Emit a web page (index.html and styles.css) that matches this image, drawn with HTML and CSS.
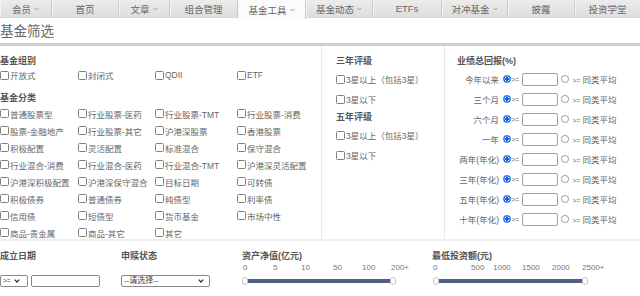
FILE: index.html
```html
<!DOCTYPE html>
<html lang="zh-CN">
<head>
<meta charset="utf-8">
<title>基金筛选</title>
<link rel="stylesheet" href="styles.css">
</head>
<body>
<nav class="nav">
  <a class="tab t1">会员<svg class="caret" viewBox="0 0 6 4"><polyline points="0.5,0.5 3,3.2 5.5,0.5"/></svg></a>
  <a class="tab t2">首页</a>
  <a class="tab t3">文章<svg class="caret" viewBox="0 0 6 4"><polyline points="0.5,0.5 3,3.2 5.5,0.5"/></svg></a>
  <a class="tab t4">组合管理</a>
  <a class="tab t5 active">基金工具<svg class="caret" viewBox="0 0 6 4"><polyline points="0.5,0.5 3,3.2 5.5,0.5"/></svg></a>
  <a class="tab t6">基金动态<svg class="caret" viewBox="0 0 6 4"><polyline points="0.5,0.5 3,3.2 5.5,0.5"/></svg></a>
  <a class="tab t7">ETFs</a>
  <a class="tab t8">对冲基金<svg class="caret" viewBox="0 0 6 4"><polyline points="0.5,0.5 3,3.2 5.5,0.5"/></svg></a>
  <a class="tab t9">披露</a>
  <a class="tab t10">投资学堂</a>
</nav>
<h1 class="title">基金筛选</h1>
<div class="rule"></div>

<section class="filters">
  <div class="col col-type">
    <h2 class="hd">基金组别</h2>
    <div class="grid grid-group">
      <label class="cb"><input type="checkbox">开放式</label>
      <label class="cb"><input type="checkbox">封闭式</label>
      <label class="cb"><input type="checkbox">QDII</label>
      <label class="cb"><input type="checkbox">ETF</label>
    </div>
    <h2 class="hd hd-cat">基金分类</h2>
    <div class="grid grid-cat">
      <label class="cb"><input type="checkbox">普通股票型</label>
      <label class="cb"><input type="checkbox">行业股票-医药</label>
      <label class="cb"><input type="checkbox">行业股票-TMT</label>
      <label class="cb"><input type="checkbox">行业股票-消费</label>
      <label class="cb"><input type="checkbox">股票-金融地产</label>
      <label class="cb"><input type="checkbox">行业股票-其它</label>
      <label class="cb"><input type="checkbox">沪港深股票</label>
      <label class="cb"><input type="checkbox">香港股票</label>
      <label class="cb"><input type="checkbox">积极配置</label>
      <label class="cb"><input type="checkbox">灵活配置</label>
      <label class="cb"><input type="checkbox">标准混合</label>
      <label class="cb"><input type="checkbox">保守混合</label>
      <label class="cb"><input type="checkbox">行业混合-消费</label>
      <label class="cb"><input type="checkbox">行业混合-医药</label>
      <label class="cb"><input type="checkbox">行业混合-TMT</label>
      <label class="cb"><input type="checkbox">沪港深灵活配置</label>
      <label class="cb"><input type="checkbox">沪港深积极配置</label>
      <label class="cb"><input type="checkbox">沪港深保守混合</label>
      <label class="cb"><input type="checkbox">目标日期</label>
      <label class="cb"><input type="checkbox">可转债</label>
      <label class="cb"><input type="checkbox">积极债券</label>
      <label class="cb"><input type="checkbox">普通债券</label>
      <label class="cb"><input type="checkbox">纯债型</label>
      <label class="cb"><input type="checkbox">利率债</label>
      <label class="cb"><input type="checkbox">信用债</label>
      <label class="cb"><input type="checkbox">短债型</label>
      <label class="cb"><input type="checkbox">货币基金</label>
      <label class="cb"><input type="checkbox">市场中性</label>
      <label class="cb"><input type="checkbox">商品-贵金属</label>
      <label class="cb"><input type="checkbox">商品-其它</label>
      <label class="cb"><input type="checkbox">其它</label>
    </div>
  </div>

  <div class="col col-rating">
    <h2 class="hd">三年评级</h2>
    <label class="cb row"><input type="checkbox">3星以上（包括3星）</label>
    <label class="cb row"><input type="checkbox">3星以下</label>
    <h2 class="hd hd-five">五年评级</h2>
    <label class="cb row"><input type="checkbox">3星以上（包括3星）</label>
    <label class="cb row"><input type="checkbox">3星以下</label>
  </div>

  <div class="col col-perf">
    <h2 class="hd">业绩总回报(%)</h2>
    <div class="prow"><span class="plabel">今年以来</span><input class="rd" type="radio" name="p1" checked><span class="ge">&gt;=</span><input class="num" type="text"><input class="rd" type="radio" name="p1"><span class="avg"><span class="ge2">&gt;=</span> 同类平均</span></div>
    <div class="prow"><span class="plabel">三个月</span><input class="rd" type="radio" name="p2" checked><span class="ge">&gt;=</span><input class="num" type="text"><input class="rd" type="radio" name="p2"><span class="avg"><span class="ge2">&gt;=</span> 同类平均</span></div>
    <div class="prow"><span class="plabel">六个月</span><input class="rd" type="radio" name="p3" checked><span class="ge">&gt;=</span><input class="num" type="text"><input class="rd" type="radio" name="p3"><span class="avg"><span class="ge2">&gt;=</span> 同类平均</span></div>
    <div class="prow"><span class="plabel">一年</span><input class="rd" type="radio" name="p4" checked><span class="ge">&gt;=</span><input class="num" type="text"><input class="rd" type="radio" name="p4"><span class="avg"><span class="ge2">&gt;=</span> 同类平均</span></div>
    <div class="prow"><span class="plabel">两年(年化)</span><input class="rd" type="radio" name="p5" checked><span class="ge">&gt;=</span><input class="num" type="text"><input class="rd" type="radio" name="p5"><span class="avg"><span class="ge2">&gt;=</span> 同类平均</span></div>
    <div class="prow"><span class="plabel">三年(年化)</span><input class="rd" type="radio" name="p6" checked><span class="ge">&gt;=</span><input class="num" type="text"><input class="rd" type="radio" name="p6"><span class="avg"><span class="ge2">&gt;=</span> 同类平均</span></div>
    <div class="prow"><span class="plabel">五年(年化)</span><input class="rd" type="radio" name="p7" checked><span class="ge">&gt;=</span><input class="num" type="text"><input class="rd" type="radio" name="p7"><span class="avg"><span class="ge2">&gt;=</span> 同类平均</span></div>
    <div class="prow"><span class="plabel">十年(年化)</span><input class="rd" type="radio" name="p8" checked><span class="ge">&gt;=</span><input class="num" type="text"><input class="rd" type="radio" name="p8"><span class="avg"><span class="ge2">&gt;=</span> 同类平均</span></div>
  </div>
</section>

<section class="bottom">
  <div class="bcol bc1">
    <h2 class="hd">成立日期</h2>
    <div class="ctrl">
      <div class="selwrap sel-op">
        <select class="sel"><option>&gt;=</option></select>
        <svg class="selcaret" viewBox="0 0 7 5"><polyline points="0.8,0.8 3.5,3.8 6.2,0.8"/></svg>
      </div>
      <input class="date" type="text">
    </div>
  </div>
  <div class="bcol bc2">
    <h2 class="hd">申赎状态</h2>
    <div class="ctrl">
      <div class="selwrap sel-status">
        <select class="sel"><option>--请选择--</option></select>
        <svg class="selcaret" viewBox="0 0 7 5"><polyline points="0.8,0.8 3.5,3.8 6.2,0.8"/></svg>
      </div>
    </div>
  </div>
  <div class="bcol bc3">
    <h2 class="hd">资产净值(亿元)</h2>
    <div class="scale scale-a"><span>0</span><span>5</span><span>10</span><span>50</span><span>100</span><span>200+</span></div>
    <div class="track track-a"><span class="knob kl"></span><span class="knob kr"></span></div>
  </div>
  <div class="bcol bc4">
    <h2 class="hd">最低投资额(元)</h2>
    <div class="scale scale-b"><span>0</span><span>500</span><span>1000</span><span>1500</span><span>2000</span><span>2500+</span></div>
    <div class="track track-b"><span class="knob kl"></span><span class="knob kr"></span></div>
  </div>
</section>
</body>
</html>
```
FILE: styles.css
```css
* { box-sizing: border-box; }
html, body { margin: 0; padding: 0; }
body {
  width: 640px;
  height: 296px;
  overflow: hidden;
  background: #fff;
  color: #666;
  font-family: "Liberation Sans", "Noto Sans CJK SC", sans-serif;
  font-size: 8.5px;
}

/* nav */
.nav {
  display: flex;
  height: 18px;
  background: linear-gradient(#ececec, #dedede);
  border-bottom: 1px solid #d6d6d6;
}
.tab {
  display: flex;
  align-items: center;
  justify-content: center;
  gap: 3px;
  height: 100%;
  font-size: 9.5px;
  color: #666;
  border-right: 1px solid #cbcbcb;
  box-shadow: inset 1px 0 0 #f4f4f4;
}
.tab.active { background: #fbfbfb; height: 19px; }
.t1 { width: 52px; }
.t2 { width: 67px; }
.t3 { width: 51px; }
.t4 { width: 68px; }
.t5 { width: 68px; }
.t6 { width: 67px; }
.t7 { width: 69px; }
.t8 { width: 66px; }
.t9 { width: 67px; }
.t10 { width: 65px; border-right: none; }
.caret {
  width: 5px;
  height: 4px;
  fill: none;
  stroke: #999;
  stroke-width: 1.1;
}

.title {
  margin: 0;
  padding-top: 4px;
  height: 25px;
  line-height: 20px;
  font-size: 13.5px;
  font-weight: normal;
  color: #666;
}
.rule { height: 3px; background: #cfcfcf; }

/* filters */
.filters {
  display: flex;
  height: 195px;
  border-bottom: 2px solid #ededed;
}
.col { padding-top: 9px; }
.col-type { width: 322px; border-right: 1px solid #e8e8e8; }
.col-rating { width: 123px; padding-left: 14px; border-right: 1px solid #e8e8e8; }
.col-perf { flex: 1; padding-left: 12px; }

.hd {
  margin: 0;
  height: 13px;
  line-height: 13px;
  font-size: 9px;
  font-weight: bold;
  color: #555;
}
.hd-cat { margin-top: 9px; height: 14px; line-height: 14px; }
.hd-five { margin-top: 1px; height: 14px; line-height: 14px; }

.grid { display: grid; grid-template-columns: 78px 77px 82px 1fr; }
.grid-group { grid-auto-rows: 14px; }
.grid-cat { grid-auto-rows: 17px; }

.cb {
  display: flex;
  align-items: center;
  white-space: nowrap;
  color: #666;
}
.cb input {
  appearance: none;
  -webkit-appearance: none;
  width: 9px;
  height: 9px;
  margin: 0 1px 0 0;
  border: 1px solid #808080;
  border-radius: 1.5px;
  background: #fff;
  flex: none;
}
.row { height: 20px; }
.col-rating .hd + .row { margin-top: 1px; }

/* performance */
.prow {
  display: flex;
  align-items: center;
  height: 20px;
}
.col-perf .hd { margin-bottom: 1px; }
.plabel { width: 42px; text-align: right; white-space: nowrap; }
.rd {
  appearance: none;
  -webkit-appearance: none;
  width: 7.5px;
  height: 7.5px;
  margin: 0;
  border-radius: 50%;
  border: 1px solid #999;
  background: #fff;
  flex: none;
}
.rd:checked {
  border-color: #1f6fe0;
  background: radial-gradient(circle, #1a5fd0 0 38%, #fff 44% 56%, #2b7bef 62%);
}
.plabel + .rd { margin-left: 4px; }
.ge { margin-left: 1px; font-size: 6.5px; color: #666; }
.num {
  width: 36px;
  height: 13px;
  margin: 0 0 0 3px;
  padding: 0;
  border: 1px solid #a0a0a0;
  border-radius: 2px;
  background: #fff;
}
.num + .rd { margin-left: 3px; }
.avg { margin-left: 4px; white-space: nowrap; }
.ge2 { font-size: 6.5px; }

/* bottom */
.bottom {
  display: grid;
  grid-template-columns: 121px 121px 190px 1fr;
  padding-top: 9px;
}
.bcol { display: flex; flex-direction: column; }
.bottom .hd { height: 12px; line-height: 12px; }
.ctrl { display: flex; align-items: center; gap: 3px; margin-top: 13px; height: 12px; }
.selwrap { position: relative; height: 12px; }
.sel-op { width: 28px; }
.sel-status { width: 89px; }
.sel {
  appearance: none;
  -webkit-appearance: none;
  width: 100%;
  height: 12px;
  margin: 0;
  padding: 0 0 0 2px;
  border: 1px solid #888;
  border-radius: 2px;
  background: #fff;
  font-family: "Liberation Sans", "Noto Sans CJK SC", sans-serif;
  font-size: 8px;
  line-height: 10px;
  color: #444;
}
.sel-op .sel { font-size: 6.5px; }
.selcaret {
  position: absolute;
  right: 6px;
  top: 4px;
  width: 6px;
  height: 4px;
  fill: none;
  stroke: #222;
  stroke-width: 1.5;
  pointer-events: none;
}
.sel-op .selcaret { right: 8px; }
.date {
  width: 69px;
  height: 12px;
  margin: 0;
  padding: 0;
  border: 1px solid #888;
  border-radius: 2px;
  background: #fff;
}

.scale {
  display: grid;
  margin-top: 1px;
  padding-left: 1px;
  height: 10px;
  line-height: 10px;
  font-size: 8px;
  color: #777;
}
.scale-a { grid-template-columns: 30px 28px 32px 29px 29px auto; }
.scale-b { grid-template-columns: 38px 22px 29px 30px 30px auto; }

.track {
  position: relative;
  margin-top: 6px;
  height: 4px;
  background: #4d6184;
}
.track-a { margin-left: 3px; width: 148px; }
.track-b { margin-left: 4px; width: 149px; }
.knob {
  position: absolute;
  top: -2px;
  width: 6px;
  height: 8px;
  border: 1px solid #c4c4c4;
  border-radius: 3px;
  background: #fff;
}
.kl { left: -3px; }
.kr { right: -3px; }
```
